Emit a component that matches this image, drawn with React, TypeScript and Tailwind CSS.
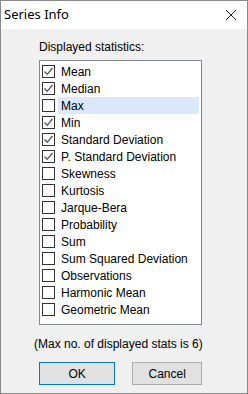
import React, { useState } from "react";

const stats = [
  "Mean",
  "Median",
  "Max",
  "Min",
  "Standard Deviation",
  "P. Standard Deviation",
  "Skewness",
  "Kurtosis",
  "Jarque-Bera",
  "Probability",
  "Sum",
  "Sum Squared Deviation",
  "Observations",
  "Harmonic Mean",
  "Geometric Mean",
];

const CheckBox: React.FC<{ checked: boolean }> = ({ checked }) => (
  <div className="w-[13px] h-[13px] border border-[#333333] bg-white flex items-center justify-center shrink-0">
    {checked && (
      <svg width="11" height="11" viewBox="0 0 11 11">
        <path d="M1.5 5.5 L4.2 8.3 L9.5 2" fill="none" stroke="#555555" strokeWidth="1.3" />
      </svg>
    )}
  </div>
);

export default function App() {
  const [checked] = useState<string[]>([
    "Mean",
    "Median",
    "Min",
    "Standard Deviation",
    "P. Standard Deviation",
  ]);
  const selected = "Max";

  return (
    <div
      className="w-[248px] h-[394px] flex flex-col bg-[#f0f0f0] border border-[#8a8a8a] text-[#000]"
      style={{ fontFamily: '"Liberation Sans", Arial, sans-serif' }}
    >
      <div className="h-[28px] bg-white flex items-center justify-between pl-[3px] pr-[10px] shrink-0">
        <span className="text-[13px]" style={{ fontFamily: '"Noto Sans", sans-serif' }}>
          Series Info
        </span>
        <svg width="12" height="12" viewBox="0 0 12 12">
          <path d="M1 1 L11 11 M11 1 L1 11" stroke="#222" strokeWidth="1" />
        </svg>
      </div>

      <div className="flex flex-col pl-[38px] pr-[45px] pt-[11px] text-[12px]">
        <div className="leading-[15px] h-[20px]">Displayed statistics:</div>
        <div className="w-[163px] h-[265px] bg-white border border-[#828790] pt-[2px] pl-[2px] pr-[2px]">
          {stats.map((s) => (
            <div key={s} className="h-[17px] flex items-center">
              <CheckBox checked={checked.includes(s)} />
              <div
                className={`flex-1 h-full flex items-center ml-[3px] pl-[3px] ${
                  s === selected ? "bg-[#dbe8fb]" : ""
                }`}
              >
                {s}
              </div>
            </div>
          ))}
        </div>
        <div className="mt-[12px] ml-[-5px] leading-[15px] whitespace-nowrap">
          (Max no. of displayed stats is 6)
        </div>
        <div className="flex mt-[10px] gap-[17px]">
          <button className="w-[79px] h-[23px] bg-[#e1e1e1] border border-[#0078d7] text-[12px]">
            OK
          </button>
          <button className="w-[72px] h-[23px] bg-[#e1e1e1] border border-[#adadad] text-[12px]">
            Cancel
          </button>
        </div>
      </div>
    </div>
  );
}
